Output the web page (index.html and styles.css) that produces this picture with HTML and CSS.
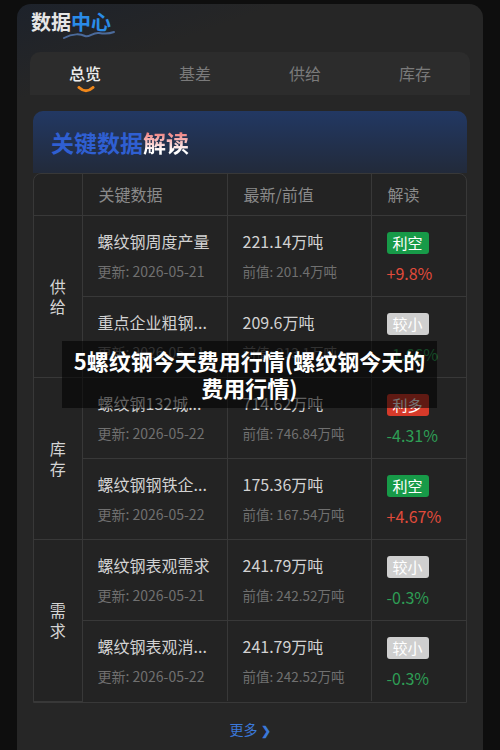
FILE: index.html
```html
<!DOCTYPE html>
<html>

<head>
    <meta charset="UTF-8">
    <title>数据中心</title>
    <link rel="stylesheet" href="styles.css">
</head>

<body>
    <div class="panel">
        <div class="brand">
            <span class="b1">数据</span><span class="b2">中心
                <svg class="wave" width="52" height="10" viewBox="0 0 52 10">
                    <path d="M1 8 C10 3 18 4 22 6 C26 8 30 2 36 3 C42 4 46 4 51 2" stroke="#4b6a9a" stroke-width="2" fill="none" stroke-linecap="round"/>
                </svg>
            </span>
        </div>

        <div class="tabs">
            <div class="tab active">总览
                <svg class="smile" width="18" height="7" viewBox="0 0 18 7">
                    <path d="M2 1.5 Q9 8 16 1.5" stroke="#f0871a" stroke-width="3" fill="none" stroke-linecap="round"/>
                </svg>
            </div>
            <div class="tab">基差</div>
            <div class="tab">供给</div>
            <div class="tab">库存</div>
        </div>

        <div class="card">
            <div class="card-title"><span class="t1">关键数据</span><span class="t2">解读</span></div>
            <div class="table-wrap">
                <table class="kt">
                    <thead>
                        <tr><th class="c1"></th><th class="c2">关键数据</th><th class="c3">最新/前值</th><th class="c4">解读</th></tr>
                    </thead>
                    <tbody>
                        <tr>
                            <td class="cat" rowspan="2">供<br>给</td>
                            <td><div class="name">螺纹钢周度产量</div><div class="sub">更新: 2026-05-21</div></td>
                            <td><div class="val">221.14万吨</div><div class="sub">前值: 201.4万吨</div></td>
                            <td><span class="tag green">利空</span><div class="pct up">+9.8%</div></td>
                        </tr>
                        <tr>
                            <td><div class="name">重点企业粗钢...</div><div class="sub">更新: 2026-05-21</div></td>
                            <td><div class="val">209.6万吨</div><div class="sub">前值: 213.1万吨</div></td>
                            <td><span class="tag grey">较小</span><div class="pct down">-1.66%</div></td>
                        </tr>
                        <tr>
                            <td class="cat" rowspan="2">库<br>存</td>
                            <td><div class="name">螺纹钢132城...</div><div class="sub">更新: 2026-05-22</div></td>
                            <td><div class="val">714.62万吨</div><div class="sub">前值: 746.84万吨</div></td>
                            <td><span class="tag red">利多</span><div class="pct down">-4.31%</div></td>
                        </tr>
                        <tr>
                            <td><div class="name">螺纹钢钢铁企...</div><div class="sub">更新: 2026-05-22</div></td>
                            <td><div class="val">175.36万吨</div><div class="sub">前值: 167.54万吨</div></td>
                            <td><span class="tag green">利空</span><div class="pct up">+4.67%</div></td>
                        </tr>
                        <tr>
                            <td class="cat" rowspan="2">需<br>求</td>
                            <td><div class="name">螺纹钢表观需求</div><div class="sub">更新: 2026-05-21</div></td>
                            <td><div class="val">241.79万吨</div><div class="sub">前值: 242.52万吨</div></td>
                            <td><span class="tag grey">较小</span><div class="pct down">-0.3%</div></td>
                        </tr>
                        <tr>
                            <td><div class="name">螺纹钢表观消...</div><div class="sub">更新: 2026-05-22</div></td>
                            <td><div class="val">241.79万吨</div><div class="sub">前值: 242.52万吨</div></td>
                            <td><span class="tag grey">较小</span><div class="pct down">-0.3%</div></td>
                        </tr>
                    </tbody>
                </table>
            </div>
            <div class="more">更多 <span class="chev">&#x276F;</span></div>
        </div>
    </div>

    <div class="headline">5螺纹钢今天费用行情(螺纹钢今天的<br>费用行情)</div>
</body>

</html>
```

FILE: styles.css
```css
* {
    box-sizing: border-box;
}
body {
    margin: 0;
    background: #0e0e0e;
    font-family: 'Noto Sans CJK SC', 'Noto Sans', sans-serif;
    color: #d0d0d0;
    height: 750px;
    overflow: hidden;
}
.panel {
    margin: 4px 17px 0;
    height: 760px;
    padding: 0 13px;
    border-radius: 14px;
    background: linear-gradient(160deg, #1d222b 0, #262626 90px);
}

.brand {
    height: 48px;
    padding: 4px 0 0 1px;
    font-size: 20px;
    font-weight: 700;
    line-height: 28px;
}
.b1 {
    color: #e6e6e6;
}
.b2 {
    color: #2a8ce8;
    position: relative;
}
.wave {
    position: absolute;
    left: -8px;
    top: 23px;
}

.tabs {
    display: flex;
    height: 43px;
    background: #2c2c2c;
    border-radius: 10px 10px 0 0;
}
.tab {
    flex: 1;
    text-align: center;
    font-size: 16px;
    line-height: 42px;
    color: #7a7a7a;
    position: relative;
}
.tab.active {
    color: #ececec;
    font-weight: 500;
}
.smile {
    position: absolute;
    left: 47px;
    top: 34px;
}

.card {
    margin: 16px 3px 0;
}
.card-title {
    height: 62px;
    padding: 14px 0 0 18px;
    border-radius: 10px 10px 0 0;
    background: linear-gradient(#223863 0, #222a3a 100%);
    font-size: 23px;
    font-weight: 700;
    line-height: 34px;
}
.t1 {
    color: #2f5fd2;
}
.t2 {
    background: linear-gradient(#e84848, #ffffff 75%);
    -webkit-background-clip: text;
    background-clip: text;
    color: transparent;
}

.table-wrap {
    border: 1px solid #383838;
    border-radius: 8px 8px 0 0;
    overflow: hidden;
    background: #232323;
}
.kt {
    width: 100%;
    border-collapse: collapse;
    table-layout: fixed;
}
.kt th,
.kt td {
    border-right: 1px solid #383838;
    border-bottom: 1px solid #383838;
    text-align: left;
    vertical-align: top;
}
.kt th:last-child,
.kt td:last-child {
    border-right: none;
}
.kt tbody tr:last-child td {
    border-bottom: none;
}
.c1 {
    width: 48px;
}
.c2 {
    width: 145px;
}
.c3 {
    width: 144px;
}
.kt th {
    height: 41px;
    font-size: 16px;
    font-weight: 400;
    color: #8a8a8a;
    padding: 0 0 0 16px;
    vertical-align: middle;
}
.kt td {
    height: 81px;
    padding: 14px 0 0 15px;
}
.kt td.cat {
    padding: 0;
    text-align: center;
    vertical-align: middle;
    font-size: 16px;
    line-height: 20px;
    color: #d4d4d4;
    border-right: 1px solid #383838;
}
.name,
.val {
    font-size: 16px;
    line-height: 22px;
    color: #d2d2d2;
    white-space: nowrap;
}
.sub {
    margin-top: 9px;
    font-size: 14px;
    line-height: 20px;
    color: #707070;
    white-space: nowrap;
}
.val + .sub {
    font-size: 13.5px;
}
.tag {
    display: inline-block;
    height: 22px;
    line-height: 22px;
    padding: 0 6px;
    border-radius: 3px;
    font-size: 15px;
    color: #fff;
}
.green {
    background: #179a48;
}
.red {
    background: #d63a2a;
}
.grey {
    background: #cfcfcf;
}
.pct {
    margin-top: 9px;
    font-size: 16px;
    line-height: 20px;
}
.up {
    color: #e14b3b;
}
.down {
    color: #2e9e55;
}

.more {
    height: 48px;
    padding-top: 16px;
    text-align: center;
    font-size: 14px;
    color: #3b78d8;
}
.chev {
    font-size: 12px;
    font-weight: 700;
}

.headline {
    position: absolute;
    left: 62px;
    top: 341px;
    width: 375px;
    height: 67px;
    padding-top: 6px;
    background: rgba(0, 0, 0, 0.55);
    color: #fff;
    font-size: 22px;
    font-weight: 700;
    line-height: 27px;
    text-align: center;
}
```
